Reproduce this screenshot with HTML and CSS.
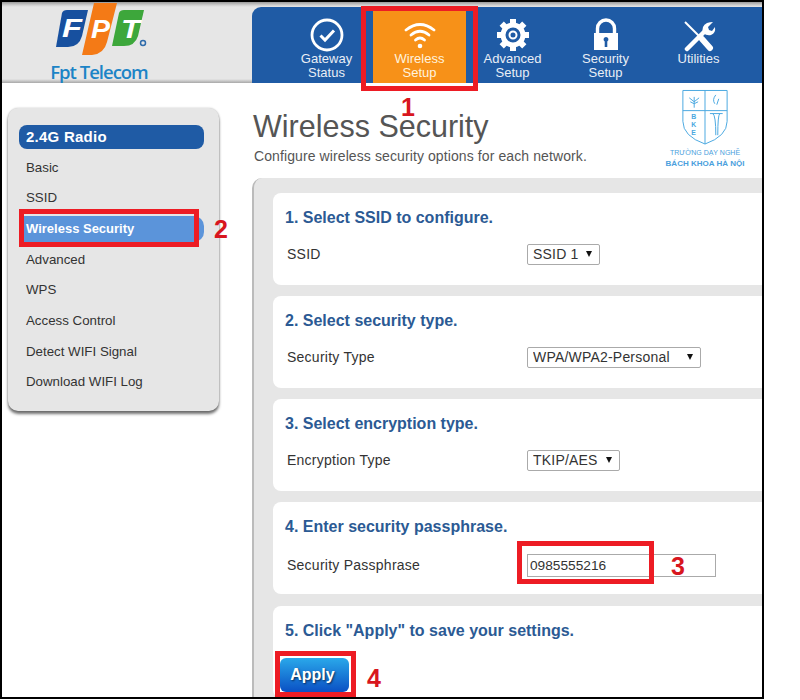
FILE: index.html
```html
<!DOCTYPE html>
<html lang="en">
<head>
<meta charset="utf-8">
<title>Wireless Security</title>
<link rel="stylesheet" href="styles.css">
</head>
<body>
<div class="page">
  <div class="frame">
    <header class="header">
      <div class="brand">
        <svg class="fpt" width="100" height="54" viewBox="50 2 100 54">
          <path d="M62 13 Q63 10 67 10 H88 L82 36 Q79 47 68 47 H56 Z" fill="#17509f"/>
          <path d="M119 13 Q120 10 124 10 H144 L138 36 Q135 46 124 46 H112 Z" fill="#3da73b"/>
          <path d="M94 3 H117 L107 42 Q104 54 92 55 H82 Z" fill="#f47a16"/>
          <text x="62" y="37" class="fpt-letter" textLength="20" lengthAdjust="spacingAndGlyphs">F</text>
          <text x="91" y="38" class="fpt-letter" textLength="19" lengthAdjust="spacingAndGlyphs">P</text>
          <text x="121" y="38" class="fpt-letter" textLength="19" lengthAdjust="spacingAndGlyphs">T</text>
          <circle cx="143" cy="43" r="2.500" fill="none" stroke="#2f6cab" stroke-width="1.500"/>
        </svg>
        <div class="brand-name">Fpt Telecom</div>
      </div>
      <nav class="nav">
        <a class="nav-item">
          <svg class="nav-icon" width="34" height="34" viewBox="0 0 34 34"><circle cx="17" cy="17" r="15" fill="none" stroke="#fff" stroke-width="2.800"/><path d="M10.500 17.500 L15 22 L24 12.500" fill="none" stroke="#fff" stroke-width="3"/></svg>
          <span>Gateway<br>Status</span>
        </a>
        <a class="nav-item active">
          <svg class="nav-icon" width="34" height="34" viewBox="0 0 34 34"><g fill="none" stroke="#fff" stroke-width="2.800" stroke-linecap="round"><path d="M3 12 Q17 1 31 12"/><path d="M8 17 Q17 9.500 26 17"/><path d="M12.500 22 Q17 18 21.500 22"/></g><circle cx="17" cy="28" r="2.300" fill="#fff"/></svg>
          <span>Wireless<br>Setup</span>
        </a>
        <a class="nav-item">
          <svg class="nav-icon" width="34" height="34" viewBox="0 0 34 34"><g fill="none" stroke="#fff"><circle cx="17" cy="17" r="10" stroke-width="5"/><circle cx="17" cy="17" r="3.500" stroke-width="2"/><path stroke-width="6" d="M17 1V6M17 28V33M1 17H6M28 17H33M5.700 5.700L9.200 9.200M24.800 24.800L28.300 28.300M5.700 28.300L9.200 24.800M24.800 9.200L28.300 5.700"/></g></svg>
          <span>Advanced<br>Setup</span>
        </a>
        <a class="nav-item">
          <svg class="nav-icon" width="34" height="34" viewBox="0 0 34 34"><path d="M8.500 16V10.500a8.500 8.500 0 0 1 17 0V16" fill="none" stroke="#fff" stroke-width="3.400"/><path fill-rule="evenodd" d="M5 15H29V32H5Z M17 19a2.500 2.500 0 0 0-1.300 4.600V29h2.600V23.600A2.500 2.500 0 0 0 17 19Z" fill="#fff"/></svg>
          <span>Security<br>Setup</span>
        </a>
        <a class="nav-item">
          <svg class="nav-icon" width="34" height="34" viewBox="0 0 34 34"><path d="M3 4 L29 30" stroke="#fff" stroke-width="2"/><path d="M20 21 L28 30" stroke="#fff" stroke-width="6" stroke-linecap="round"/><path d="M5 31 L22 14" stroke="#fff" stroke-width="4.500" stroke-linecap="round"/><path d="M21 15 Q19 8 25 5 Q28 4 31 4 L26 9 L27 12 L30 13 L33 9 Q34 15 29 17 Q25 18 21 15Z" fill="#fff"/></svg>
          <span>Utilities</span>
        </a>
      </nav>
    </header>
    <div class="body">
      <aside class="sidebar">
        <h2 class="side-title">2.4G Radio</h2>
        <ul class="side-list">
          <li>Basic</li>
          <li>SSID</li>
          <li class="current">Wireless Security</li>
          <li>Advanced</li>
          <li>WPS</li>
          <li>Access Control</li>
          <li>Detect WIFI Signal</li>
          <li>Download WIFI Log</li>
        </ul>
      </aside>
      <main class="main">
        <h1 class="title">Wireless Security</h1>
        <p class="subtitle">Configure wireless security options for each network.</p>
        <div class="panel">
          <section class="card">
            <h3>1. Select SSID to configure.</h3>
            <div class="row"><label>SSID</label><div class="select w-ssid"><select><option>SSID 1</option></select></div></div>
          </section>
          <section class="card">
            <h3>2. Select security type.</h3>
            <div class="row"><label>Security Type</label><div class="select w-type"><select><option>WPA/WPA2-Personal</option></select></div></div>
          </section>
          <section class="card">
            <h3>3. Select encryption type.</h3>
            <div class="row"><label>Encryption Type</label><div class="select w-enc"><select><option>TKIP/AES</option></select></div></div>
          </section>
          <section class="card">
            <h3>4. Enter security passphrase.</h3>
            <div class="row row-pass"><label>Security Passphrase</label><input class="pass" type="text" value="0985555216"></div>
          </section>
          <section class="card card-last">
            <h3>5. Click "Apply" to save your settings.</h3>
            <button class="apply" type="button">Apply</button>
          </section>
        </div>
      </main>
    </div>
  </div>

  <div class="school">
    <svg width="48" height="57" viewBox="0 0 48 58">
      <g fill="none" stroke="#4aa8e0" stroke-width="1">
        <path d="M1.500 1.500H46.500V33Q46.500 48 24 56Q1.500 48 1.500 33Z"/>
        <path d="M24 1.500V56M1.500 22H46.500"/>
        <path d="M13 19V8M13 13L8 9M13 13L18 9M13 15L9 13M13 15L17 13"/>
        <path d="M35 6Q31 11 34 15M38 10Q37 13 36 16"/>
        <path d="M29 25H42M32 25Q35 27 35 47M39 25Q37 27 37 47"/>
      </g>
      <text x="10" y="31" class="school-letter">B</text>
      <text x="10" y="39" class="school-letter">K</text>
      <text x="10" y="47" class="school-letter">E</text>
    </svg>
    <div class="school-line">TRƯỜNG DẠY NGHỀ</div>
    <div class="school-line strong">BÁCH KHOA HÀ NỘI</div>
  </div>

  <div class="mark mark-1"></div>
  <div class="mark mark-2"></div>
  <div class="mark mark-3"></div>
  <div class="mark mark-4"></div>
  <span class="num num-1">1</span>
  <span class="num num-2">2</span>
  <span class="num num-3">3</span>
  <span class="num num-4">4</span>
</div>
</body>
</html>
```
FILE: styles.css
```css
* { box-sizing: border-box; }
html, body { margin: 0; padding: 0; background: #fff; }
body { font-family: "Liberation Sans", Arial, sans-serif; color: #333; }
.page { position: relative; width: 800px; height: 700px; overflow: hidden; }
.frame { width: 764px; height: 699px; border: 2px solid #000; overflow: hidden; background: #fff; }

.header { display: flex; height: 81px; background: linear-gradient(#9a9a9a 0, #cfcfcf 3px, #e6e6e6 5px, #e6e6e6 77px, #a8a8a8 81px); }
.brand { width: 250px; display: flex; flex-direction: column; align-items: flex-start; padding-left: 48px; }
.fpt { display: block; margin-top: 0; flex: none; }
.fpt-letter { font: italic 700 26px "Liberation Sans", sans-serif; fill: #fff; }
.brand-name { width: 98px; margin-top: 5px; font: 600 18.500px/22px "Open Sans", sans-serif; color: #1c84c6; letter-spacing: -1px; text-align: center; white-space: nowrap; }

.nav { flex: 1; display: flex; margin-top: 5px; padding: 3px 0 0 28px; background: #1f5ba5; border-radius: 9px 0 0 0; }
.nav-item { width: 93px; display: flex; flex-direction: column; align-items: center; padding-top: 8px; color: #e9eef6; font-size: 13px; line-height: 14px; text-align: center; }
.nav-item.active { background: #f79118; color: #fff3df; }
.nav-icon { display: block; height: 34px; margin-bottom: 0; flex: none; }

.body { display: flex; align-items: flex-start; }
.sidebar { width: 211px; height: 303px; margin: 25px 0 0 6px; padding: 17px 15px 14px 11px; background: #e6e6e6; border-radius: 10px; box-shadow: 0 3px 3px rgba(0,0,0,.55), 0 0 2px rgba(0,0,0,.25); }
.side-title { margin: 0; height: 24px; padding-left: 7px; font-size: 15px; line-height: 24px; letter-spacing: .25px; color: #fff; background: #1f5ba5; border-radius: 8px; }
.side-list { list-style: none; margin: 3.500px 0 0; padding: 0; }
.side-list li { height: 30.700px; padding-left: 7px; font-size: 13.300px; line-height: 30.700px; color: #333; }
.side-list li.current { height: 26px; margin: 2.350px 0; line-height: 26px; font-weight: 700; font-size: 13px; color: #fff; background: #5b94da; border-radius: 0 10px 10px 0; }

.main { flex: 1; margin-left: 33px; padding-top: 31px; min-width: 0; }
.title { margin: 0 0 0 1px; font-size: 30.500px; font-weight: 400; line-height: 24px; color: #555; }
.subtitle { margin: 8px 0 0 2px; font-size: 14px; line-height: 20px; color: #555; letter-spacing: .1px; }
.panel { display: flex; flex-direction: column; gap: 11px; height: 530px; margin-top: 12px; padding: 15px 0 20px 19px; background: #e6e6e6; border-left: 2px solid #bbb; border-radius: 10px 0 0 0; }
.card { flex: none; height: 92px; padding: 15px 0 0 12px; background: #fff; border-radius: 8px 0 0 8px; }
.card-last { margin-top: 1px; }
.card h3 { margin: 0; font-size: 16px; line-height: 20px; color: #2b5a94; }
.row { display: flex; align-items: center; height: 22px; margin-top: 15px; padding-left: 2px; }
.row-pass { margin-top: 16px; height: 24px; }
.row label { width: 240px; flex: none; font-size: 14px; color: #333; letter-spacing: .25px; }
.select { position: relative; height: 21px; }
.select select { appearance: none; -webkit-appearance: none; display: block; width: 100%; height: 21px; padding: 0 0 0 5px; background: #fff; border: 1px solid #aaa; border-radius: 2px; font: 14px/19px "Liberation Sans", sans-serif; letter-spacing: .2px; color: #333; }
.select::after { content: ""; position: absolute; right: 8px; top: 7px; border-style: solid; border-width: 6px 3.500px 0; border-color: #111 transparent transparent; }
.w-ssid { width: 73px; }
.w-type { width: 174px; }
.w-enc { width: 93px; }
.pass { width: 189px; height: 23px; padding: 0 2px; border: 1px solid #aaa; font: 13.700px "Liberation Sans", sans-serif; color: #333; background: #fff; outline: none; }
.apply { display: block; width: 69px; height: 34px; margin: 17px 0 0 -5px; padding: 0 4px 0 0; border: 0; border-radius: 6px; background: linear-gradient(#2aa8ea, #0a50c4); color: #fff; font: 700 16px "Liberation Sans", sans-serif; text-shadow: 1px 1px 2px rgba(0,0,0,.6); }

.school { position: absolute; left: 660px; top: 89px; width: 90px; display: flex; flex-direction: column; align-items: center; color: #4aa0dd; }
.school svg { display: block; margin-bottom: 2px; }
.school-letter { font: 700 7px "Liberation Sans", sans-serif; fill: #4aa8e0; }
.school-line { font-size: 7px; line-height: 10px; white-space: nowrap; }
.school-line.strong { font-size: 8px; line-height: 11px; font-weight: 700; }

.mark { position: absolute; border: 5px solid #ed1c24; }
.mark-1 { left: 361px; top: 6px; width: 117px; height: 85px; }
.mark-2 { left: 19px; top: 209px; width: 180px; height: 38px; }
.mark-3 { left: 517px; top: 541px; width: 137px; height: 43px; }
.mark-4 { left: 275px; top: 651px; width: 81px; height: 46px; }
.num { position: absolute; font-weight: 700; font-size: 25px; line-height: 18px; color: #d8161e; }
.num-1 { left: 401px; top: 98px; }
.num-2 { left: 214px; top: 220px; }
.num-3 { left: 671px; top: 557px; }
.num-4 { left: 367px; top: 669px; }
```
